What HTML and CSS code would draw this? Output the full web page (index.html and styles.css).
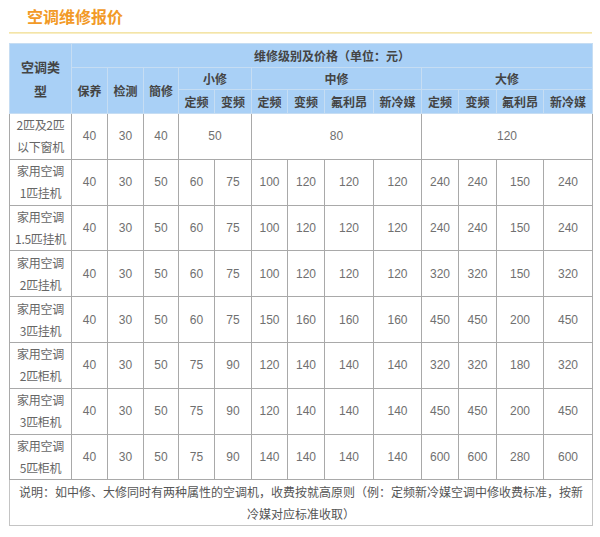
FILE: index.html
```html
<!DOCTYPE html>
<html lang="zh">
<head>
<meta charset="utf-8">
<link rel="stylesheet" href="styles.css">
</head>
<body>
<div class="page">
  <div class="title">空调维修报价</div>
  <div class="rule"></div>
  <table class="price">
    <colgroup>
      <col style="width:62px"><col style="width:36px"><col style="width:36px"><col style="width:35px">
      <col style="width:36px"><col style="width:37px">
      <col style="width:36px"><col style="width:37px"><col style="width:49px"><col style="width:48px">
      <col style="width:37px"><col style="width:38px"><col style="width:47px"><col style="width:49px">
    </colgroup>
    <thead>
      <tr class="h1">
        <th rowspan="3" class="type">空调类<br>型</th>
        <th colspan="13">维修级别及价格（单位：元）</th>
      </tr>
      <tr class="h2">
        <th rowspan="2">保养</th>
        <th rowspan="2">检测</th>
        <th rowspan="2">簡修</th>
        <th colspan="2">小修</th>
        <th colspan="4">中修</th>
        <th colspan="4">大修</th>
      </tr>
      <tr class="h3">
        <th>定频</th><th>变频</th>
        <th>定频</th><th>变频</th><th>氟利昂</th><th>新冷媒</th>
        <th>定频</th><th>变频</th><th>氟利昂</th><th>新冷媒</th>
      </tr>
    </thead>
    <tbody>
      <tr><td class="name">2匹及2匹<br>以下窗机</td><td>40</td><td>30</td><td>40</td><td colspan="2">50</td><td colspan="4">80</td><td colspan="4">120</td></tr>
      <tr><td class="name">家用空调<br>1匹挂机</td><td>40</td><td>30</td><td>50</td><td>60</td><td>75</td><td>100</td><td>120</td><td>120</td><td>120</td><td>240</td><td>240</td><td>150</td><td>240</td></tr>
      <tr><td class="name">家用空调<br>1.5匹挂机</td><td>40</td><td>30</td><td>50</td><td>60</td><td>75</td><td>100</td><td>120</td><td>120</td><td>120</td><td>240</td><td>240</td><td>150</td><td>240</td></tr>
      <tr><td class="name">家用空调<br>2匹挂机</td><td>40</td><td>30</td><td>50</td><td>60</td><td>75</td><td>100</td><td>120</td><td>120</td><td>120</td><td>320</td><td>320</td><td>150</td><td>320</td></tr>
      <tr><td class="name">家用空调<br>3匹挂机</td><td>40</td><td>30</td><td>50</td><td>60</td><td>75</td><td>150</td><td>160</td><td>160</td><td>160</td><td>450</td><td>450</td><td>200</td><td>450</td></tr>
      <tr><td class="name">家用空调<br>2匹柜机</td><td>40</td><td>30</td><td>50</td><td>75</td><td>90</td><td>120</td><td>140</td><td>140</td><td>140</td><td>320</td><td>320</td><td>180</td><td>320</td></tr>
      <tr><td class="name">家用空调<br>3匹柜机</td><td>40</td><td>30</td><td>50</td><td>75</td><td>90</td><td>120</td><td>140</td><td>140</td><td>140</td><td>450</td><td>450</td><td>200</td><td>450</td></tr>
      <tr><td class="name">家用空调<br>5匹柜机</td><td>40</td><td>30</td><td>50</td><td>75</td><td>90</td><td>140</td><td>140</td><td>140</td><td>140</td><td>600</td><td>600</td><td>280</td><td>600</td></tr>
      <tr class="note"><td colspan="14">说明：如中修、大修同时有两种属性的空调机，收费按就高原则（例：定频新冷媒空调中修收费标准，按新冷媒对应标准收取）</td></tr>
    </tbody>
  </table>
</div>
</body>
</html>
```

FILE: styles.css
```css
html, body {
  margin: 0;
  padding: 0;
  background: #ffffff;
}
body {
  font-family: "Noto Sans CJK SC", "Liberation Sans", sans-serif;
  color: #555;
}
.page {
  width: 583px;
  padding-left: 9px;
}
.title {
  height: 32px;
  line-height: 33px;
  padding-left: 18px;
  font-size: 16px;
  font-weight: bold;
  color: #f29a27;
}
.rule {
  height: 2px;
  background: linear-gradient(to bottom, #f1e09a, #faf2d2);
}
.price {
  margin-top: 9px;
  width: 583px;
  table-layout: fixed;
  border-collapse: collapse;
  border: 1px solid #c4c4c4;
}
.price th {
  background: #a9d0f6;
  color: #444;
  font-size: 12px;
  font-weight: bold;
  border: 1px solid #c6ddf3;
  padding: 0;
  text-align: center;
  line-height: 16px;
}
.price th.type {
  font-size: 13px;
  line-height: 24px;
}
.price tr.h1 { height: 24px; }
.price tr.h2 { height: 22px; }
.price tr.h3 { height: 24px; }
.price td {
  border: 1px solid #a9a9a9;
  text-align: center;
  font-size: 12px;
  color: #707070;
  padding: 0;
  height: 44.8px;
  font-family: "Liberation Sans", "Noto Sans CJK SC", sans-serif;
}
.price td.name {
  font-family: "Noto Sans CJK SC", sans-serif;
  line-height: 22px;
  letter-spacing: -0.3px;
  color: #666;
}
.price tr.note td {
  font-family: "Noto Sans CJK SC", sans-serif;
  line-height: 22px;
  padding: 0 4px;
  color: #555;
  border-color: #c4c4c4;
}
```
